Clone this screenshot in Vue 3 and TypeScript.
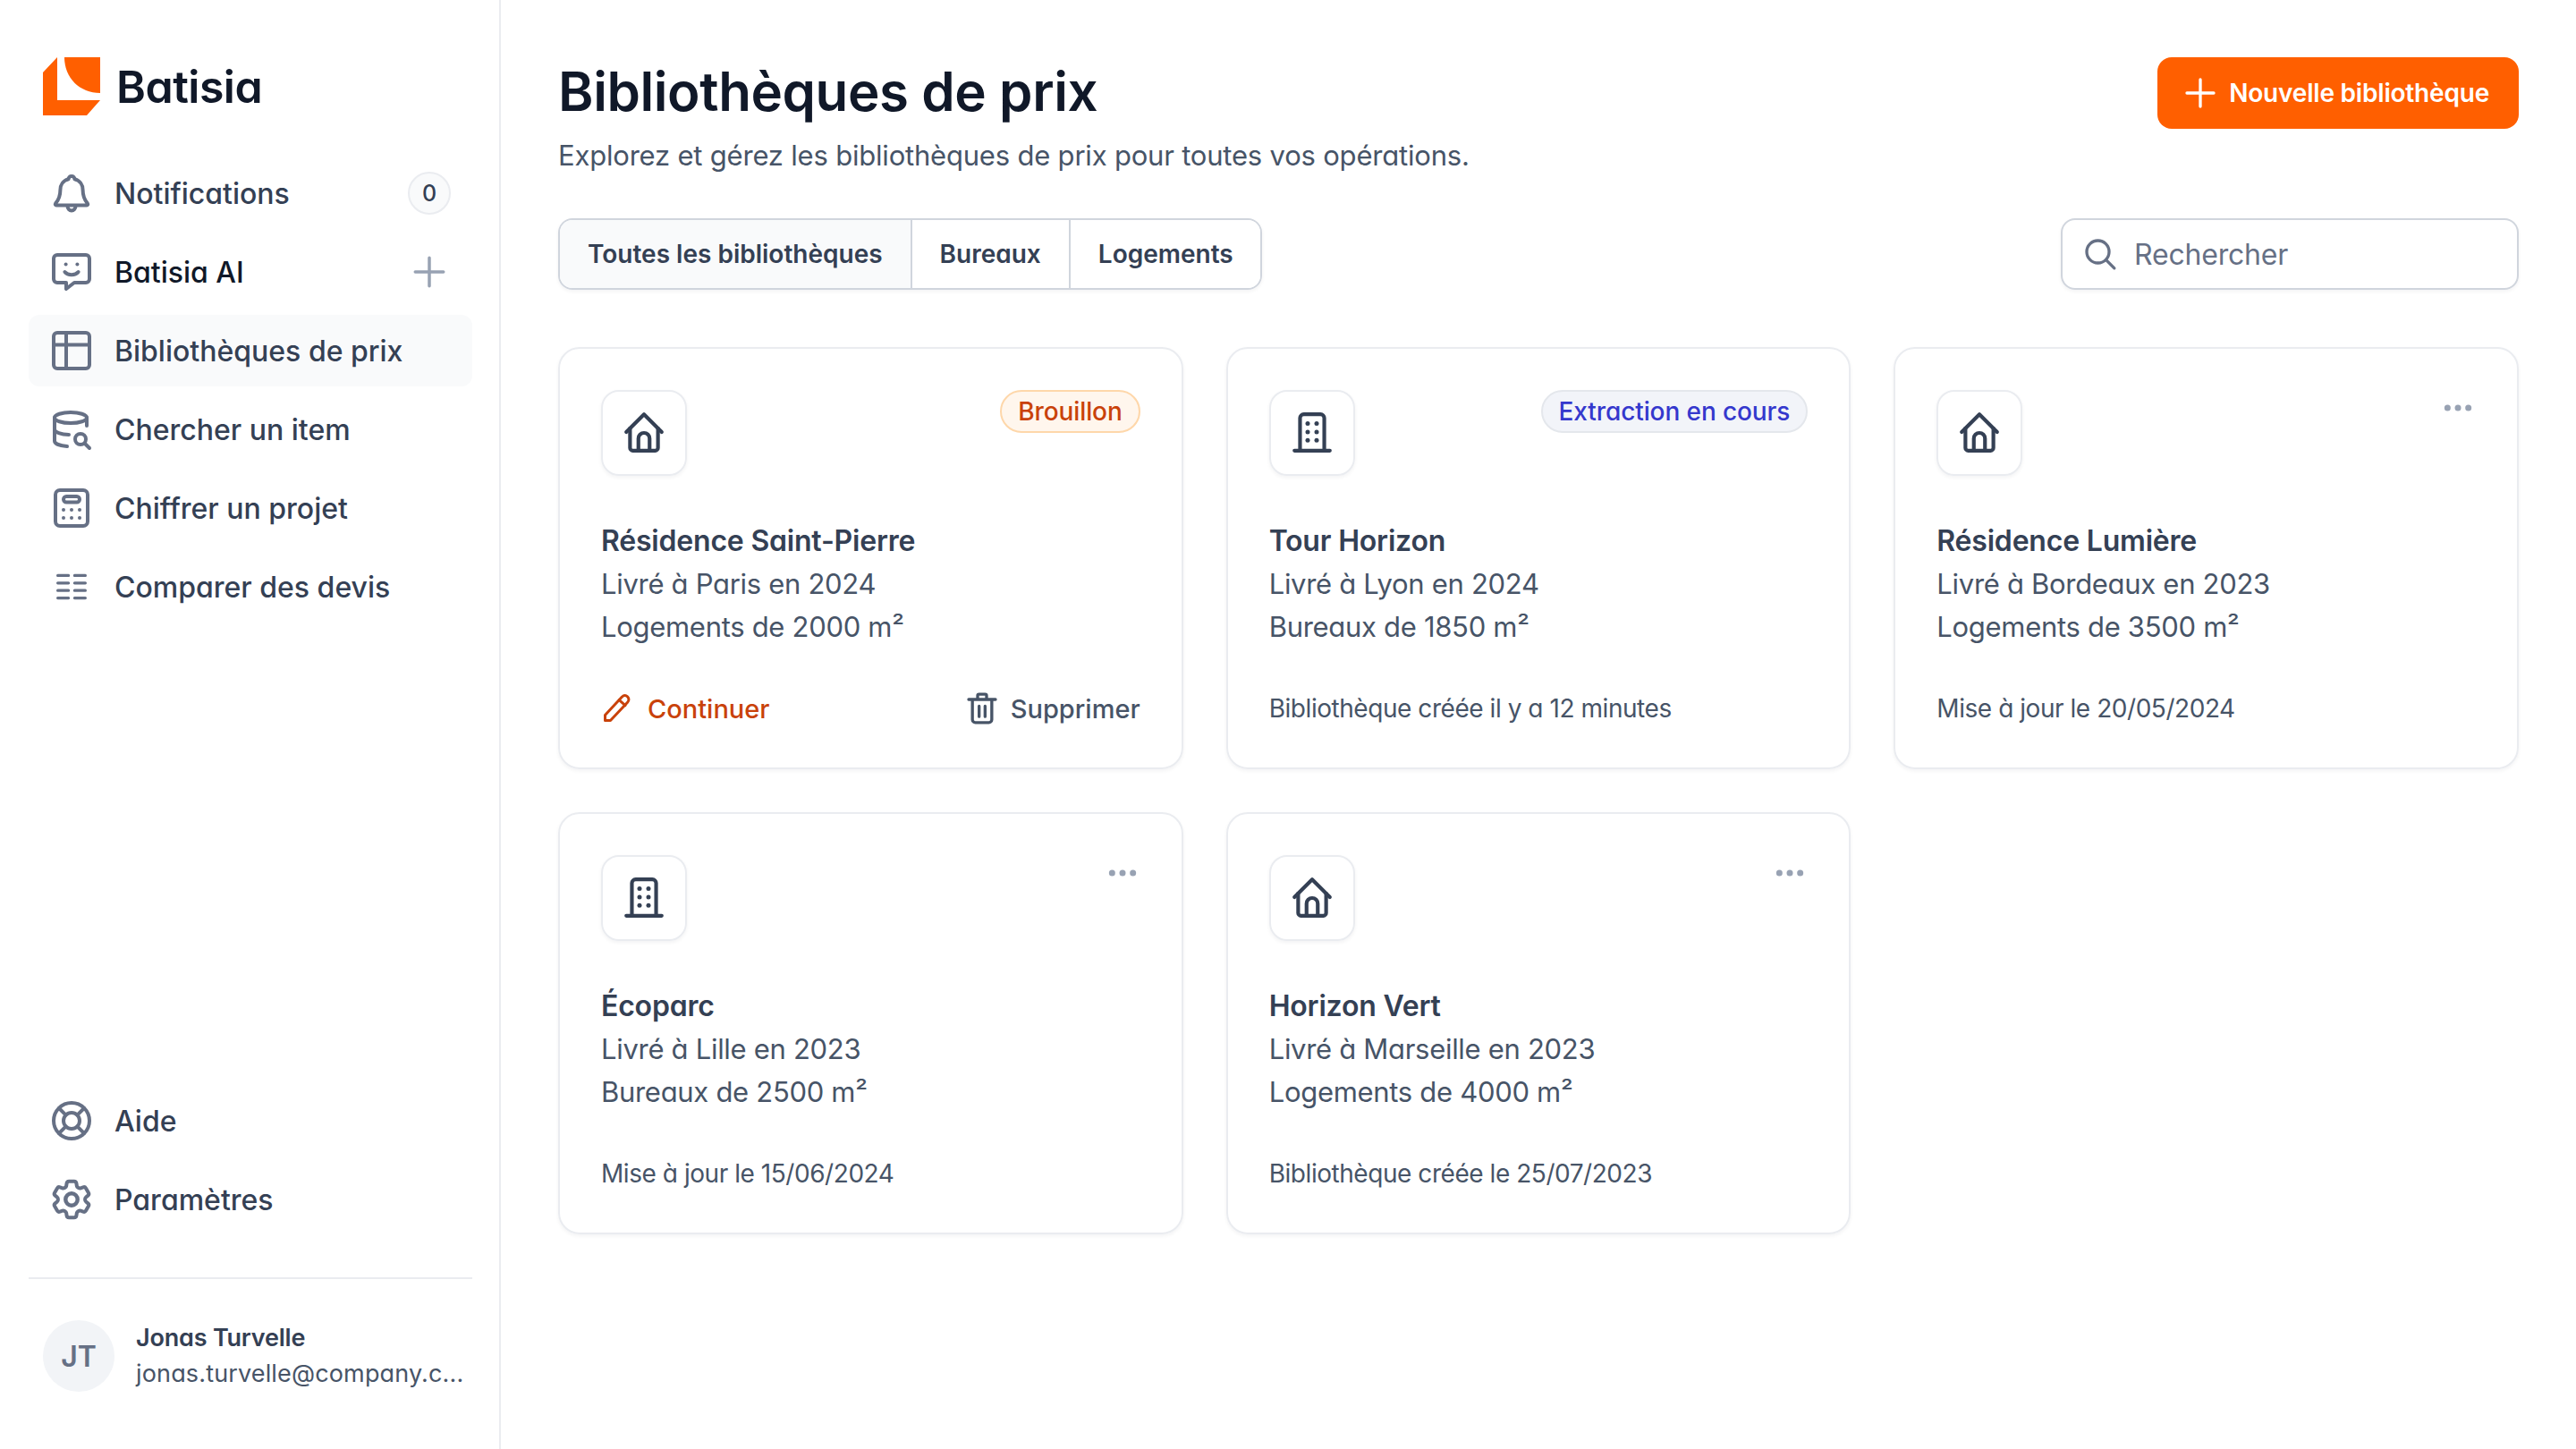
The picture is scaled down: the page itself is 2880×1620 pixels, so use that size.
<script setup lang="ts">
const icons: Record<string, string> = {
  bell: '<path d="M14.200 19.500a2.200 2.200 0 0 1-4.400 0"/><path d="M12 2.500c1 0 1.700.7 1.700 1.600 2.900.7 4.600 3.200 4.600 6.100 0 3.600.9 5.500 2.700 7.600.3.400 0 1-.5 1H3.500c-.5 0-.8-.6-.5-1 1.800-2.100 2.700-4 2.700-7.600 0-2.900 1.700-5.400 4.600-6.100 0-.9.700-1.600 1.700-1.600Z"/>',
  chat: '<path d="M4 2.500h16a2 2 0 0 1 2 2V16a2 2 0 0 1-2 2h-6.500L9 21.500V18H4a2 2 0 0 1-2-2V4.500a2 2 0 0 1 2-2Z"/><circle cx="8.800" cy="7.800" r="1" fill="currentColor" stroke="none"/><circle cx="15.200" cy="7.800" r="1" fill="currentColor" stroke="none"/><path d="M8.200 12c.8 1 2.200 1.600 3.800 1.600s3-.6 3.800-1.600"/>',
  table: '<rect x="2" y="2" width="20" height="20" rx="2"/><path d="M2 8.800h20M9 2v20"/>',
  db: '<ellipse cx="11.500" cy="5.500" rx="9" ry="3"/><path d="M2.500 5.500v13c0 1.500 3 2.700 7 3M20.500 5.500V10M2.500 12c0 1.500 3.500 3 8 3"/><circle cx="17" cy="17.500" r="3"/><path d="m19.500 20 2.500 2.500"/>',
  calc: '<rect x="3" y="2" width="18" height="20" rx="2.500"/><rect x="7.500" y="5.500" width="9" height="3.200" rx="1.600"/><g fill="currentColor" stroke="none"><circle cx="7.500" cy="13" r="1"/><circle cx="12" cy="13" r="1"/><circle cx="16.500" cy="13" r="1"/><circle cx="7.500" cy="17.500" r="1"/><circle cx="12" cy="17.500" r="1"/><circle cx="16.500" cy="17.500" r="1"/></g>',
  compare: '<path stroke-width="1.600" d="M4.300 5.700h6M4.300 9.900h6M4.300 14.100h6M4.300 18.300h6M13.700 5.700h6M13.700 9.900h6M13.700 14.100h6M13.700 18.300h6"/>',
  help: '<circle cx="12" cy="12" r="10"/><circle cx="12" cy="12" r="4.500"/><path d="m5 5 3.800 3.800M15.200 15.200 19 19M19 5l-3.800 3.800M8.800 15.200 5 19"/>',
  gear: '<g transform="translate(12 12) scale(1.120) translate(-12 -12)"><path stroke-width="1.800" d="M9.594 3.940c.09-.542.56-.94 1.110-.94h2.593c.55 0 1.020.398 1.110.94l.213 1.281c.063.374.313.686.645.87.074.04.147.083.22.127.325.196.72.257 1.075.124l1.217-.456a1.125 1.125 0 0 1 1.370.49l1.296 2.247a1.125 1.125 0 0 1-.26 1.431l-1.003.827c-.293.241-.438.613-.43.992a7.723 7.723 0 0 1 0 .255c-.008.378.137.75.43.991l1.004.827c.424.35.534.955.26 1.430l-1.298 2.247a1.125 1.125 0 0 1-1.369.491l-1.217-.456c-.355-.133-.75-.072-1.076.124a6.470 6.470 0 0 1-.22.128c-.331.183-.581.495-.644.869l-.213 1.281c-.09.543-.56.94-1.110.94h-2.594c-.55 0-1.019-.398-1.110-.94l-.213-1.281c-.062-.374-.312-.686-.644-.87a6.520 6.520 0 0 1-.22-.127c-.325-.196-.72-.257-1.076-.124l-1.217.456a1.125 1.125 0 0 1-1.369-.49l-1.297-2.247a1.125 1.125 0 0 1 .26-1.431l1.004-.827c.292-.24.437-.613.43-.991a6.932 6.932 0 0 1 0-.255c.007-.38-.138-.751-.43-.992l-1.004-.827a1.125 1.125 0 0 1-.26-1.430l1.297-2.247a1.125 1.125 0 0 1 1.370-.491l1.216.456c.356.133.751.072 1.076-.124.072-.044.146-.086.22-.128.332-.183.582-.495.644-.869l.214-1.280Z"/><circle cx="12" cy="12" r="3"/></g>',
  home: '<path d="M2.500 11.500 12 2l9.500 9.500"/><path d="M4.500 9.500V20a1.500 1.500 0 0 0 1.500 1.500h12a1.500 1.500 0 0 0 1.500-1.500V9.500"/><path d="M9 21.500V15a3 3 0 0 1 6 0v6.500"/>',
  building: '<path d="M5.500 21.500V4a2 2 0 0 1 2-2h9a2 2 0 0 1 2 2v17.500M2.500 21.500h19"/><g fill="currentColor" stroke="none"><circle cx="9.600" cy="7" r="1.200"/><circle cx="14.400" cy="7" r="1.200"/><circle cx="9.600" cy="11.500" r="1.200"/><circle cx="14.400" cy="11.500" r="1.200"/><circle cx="9.600" cy="16" r="1.200"/><circle cx="14.400" cy="16" r="1.200"/></g>',
  dots: '<g fill="currentColor" stroke="none"><circle cx="5" cy="12" r="2.100"/><circle cx="12" cy="12" r="2.100"/><circle cx="19" cy="12" r="2.100"/></g>',
  plus: '<path d="M12 3v18M3 12h18"/>',
  search: '<circle cx="10.500" cy="10.500" r="7.500"/><path d="m16 16 5.500 5.500"/>',
  pen: '<path d="M3 21v-4L15.500 3.500c1.300-1.300 3-1.400 4.200-.3 1.300 1.200 1.200 3 0 4.300L7 21H3Z"/><path d="m13.500 5.800 4.500 4"/>',
  trash: '<path d="M3 6h18M5.500 6v13.500a2 2 0 0 0 2 2h9a2 2 0 0 0 2-2V6M9 6V3.500a1 1 0 0 1 1-1h4a1 1 0 0 1 1 1V6M10 10.500v7M14 10.500v7"/>'
}

const topNav = [
  { icon: 'bell', label: 'Notifications', badge: '0' },
  { icon: 'chat', label: 'Batisia AI', plus: true, strong: true },
  { icon: 'table', label: 'Bibliothèques de prix', active: true },
  { icon: 'db', label: 'Chercher un item' },
  { icon: 'calc', label: 'Chiffrer un projet' },
  { icon: 'compare', label: 'Comparer des devis' }
]
const bottomNav = [
  { icon: 'help', label: 'Aide' },
  { icon: 'gear', label: 'Paramètres' }
]
const tabs = ['Toutes les bibliothèques', 'Bureaux', 'Logements']
const cards = [
  { icon: 'home', name: 'Résidence Saint-Pierre', place: 'Livré à Paris en 2024', size: 'Logements de 2000 m²', status: 'draft' },
  { icon: 'building', name: 'Tour Horizon', place: 'Livré à Lyon en 2024', size: 'Bureaux de 1850 m²', status: 'extract', note: 'Bibliothèque créée il y a 12 minutes' },
  { icon: 'home', name: 'Résidence Lumière', place: 'Livré à Bordeaux en 2023', size: 'Logements de 3500 m²', note: 'Mise à jour le 20/05/2024' },
  { icon: 'building', name: 'Écoparc', place: 'Livré à Lille en 2023', size: 'Bureaux de 2500 m²', note: 'Mise à jour le 15/06/2024' },
  { icon: 'home', name: 'Horizon Vert', place: 'Livré à Marseille en 2023', size: 'Logements de 4000 m²', note: 'Bibliothèque créée le 25/07/2023' }
]
</script>

<template>
  <div class="page">
    <aside class="sidebar">
      <div class="brand">
        <svg class="logo" viewBox="0 0 64 65" width="64" height="65">
          <path fill="#ff5f00" d="M0 17 16 0v48h48L49 65H0Z" />
          <path fill="#ff5f00" d="M24 0h40v40C41 40 24 23 24 0Z" />
        </svg>
        <span class="brand-name">Batisia</span>
      </div>
      <nav class="nav">
        <a v-for="item in topNav" :key="item.label" class="nav-item" :class="{ active: item.active, strong: item.strong }">
          <svg class="icon nav-icon" viewBox="0 0 24 24" v-html="icons[item.icon]"></svg>
          <span class="nav-label">{{ item.label }}</span>
          <span v-if="item.badge" class="count">{{ item.badge }}</span>
          <svg v-if="item.plus" class="icon nav-plus" viewBox="0 0 24 24" v-html="icons.plus"></svg>
        </a>
      </nav>
      <nav class="nav nav-bottom">
        <a v-for="item in bottomNav" :key="item.label" class="nav-item">
          <svg class="icon nav-icon" viewBox="0 0 24 24" v-html="icons[item.icon]"></svg>
          <span class="nav-label">{{ item.label }}</span>
        </a>
      </nav>
      <div class="user">
        <div class="avatar">JT</div>
        <div class="user-text">
          <div class="user-name">Jonas Turvelle</div>
          <div class="user-mail">jonas.turvelle@company.c...</div>
        </div>
      </div>
    </aside>

    <main class="main">
      <header class="head">
        <div>
          <h1>Bibliothèques de prix</h1>
          <p>Explorez et gérez les bibliothèques de prix pour toutes vos opérations.</p>
        </div>
        <button class="primary">
          <svg class="icon" viewBox="0 0 24 24" v-html="icons.plus"></svg>
          <span>Nouvelle bibliothèque</span>
        </button>
      </header>

      <div class="toolbar">
        <div class="tabs">
          <button v-for="(tab, i) in tabs" :key="tab" class="tab" :class="{ on: i === 0 }">{{ tab }}</button>
        </div>
        <div class="search">
          <svg class="icon" viewBox="0 0 24 24" v-html="icons.search"></svg>
          <span>Rechercher</span>
        </div>
      </div>

      <section class="grid">
        <article v-for="card in cards" :key="card.name" class="card">
          <div class="card-top">
            <div class="card-icon">
              <svg class="icon" viewBox="0 0 24 24" v-html="icons[card.icon]"></svg>
            </div>
            <span v-if="card.status === 'draft'" class="pill pill-draft">Brouillon</span>
            <span v-else-if="card.status === 'extract'" class="pill pill-extract">Extraction en cours</span>
            <svg v-else class="icon more" viewBox="0 0 24 24" v-html="icons.dots"></svg>
          </div>
          <h2>{{ card.name }}</h2>
          <div class="line">{{ card.place }}</div>
          <div class="line">{{ card.size }}</div>
          <div class="card-foot">
            <template v-if="card.note">
              <span class="note">{{ card.note }}</span>
            </template>
            <template v-else>
              <span class="act act-go">
                <svg class="icon" viewBox="0 0 24 24" v-html="icons.pen"></svg>Continuer
              </span>
              <span class="act act-del">
                <svg class="icon" viewBox="0 0 24 24" v-html="icons.trash"></svg>Supprimer
              </span>
            </template>
          </div>
        </article>
      </section>
    </main>
  </div>
</template>

<style>
html, body { margin: 0; background: #fff; }
</style>

<style scoped>
.page {
  display: flex;
  width: 2880px;
  height: 1620px;
  background: #fff;
  font-family: Inter, "Liberation Sans", sans-serif;
  font-feature-settings: "cv11" 1;
  color: #344054;
  overflow: hidden;
}
.icon {
  fill: none;
  stroke: currentColor;
  stroke-width: 2;
  stroke-linecap: round;
  stroke-linejoin: round;
  flex: none;
}

.sidebar {
  width: 560px;
  box-sizing: border-box;
  border-right: 2px solid #eaecf0;
  padding: 64px 30px 64px 32px;
  display: flex;
  flex-direction: column;
}
.brand {
  display: flex;
  align-items: center;
  gap: 18px;
  padding-left: 16px;
  height: 65px;
  margin-bottom: 47px;
}
.brand-name {
  font-size: 50px;
  font-weight: 600;
  color: #101828;
  letter-spacing: -0.5px;
}
.nav {
  display: flex;
  flex-direction: column;
  gap: 8px;
}
.nav-bottom {
  margin-top: auto;
}
.nav-item {
  display: flex;
  align-items: center;
  height: 80px;
  padding: 0 24px;
  border-radius: 12px;
  font-size: 32px;
  font-weight: 500;
  color: #344054;
}
.nav-item.active { background: #f9fafb; }
.nav-item.strong { color: #101828; }
.nav-icon {
  width: 48px;
  height: 48px;
  color: #667085;
  margin-right: 24px;
}
.nav-label { flex: 1; white-space: nowrap; }
.count {
  width: 48px;
  height: 48px;
  box-sizing: border-box;
  border: 2px solid #eaecf0;
  border-radius: 50%;
  background: #f9fafb;
  font-size: 25px;
  font-weight: 500;
  display: flex;
  align-items: center;
  justify-content: center;
}
.nav-plus {
  width: 42px;
  height: 42px;
  color: #98a2b3;
  margin-right: 3px;
}
.user {
  margin-top: 47px;
  padding: 46px 0 0 16px;
  border-top: 2px solid #eaecf0;
  display: flex;
  align-items: center;
  gap: 24px;
}
.avatar {
  width: 80px;
  height: 80px;
  border-radius: 50%;
  background: #f2f4f7;
  color: #667085;
  font-size: 32px;
  font-weight: 600;
  display: flex;
  align-items: center;
  justify-content: center;
  flex: none;
}
.user-text { min-width: 0; flex: 1; }
.user-name {
  font-size: 27px;
  font-weight: 600;
  line-height: 40px;
  letter-spacing: -0.2px;
}
.user-mail {
  font-size: 27px;
  line-height: 40px;
  letter-spacing: 0.15px;
  color: #475467;
  white-space: nowrap;
}

.main {
  flex: 1;
  padding: 64px 64px 0;
  min-width: 0;
}
.head {
  display: flex;
  justify-content: space-between;
  align-items: flex-start;
}
h1 {
  margin: 0;
  font-size: 60px;
  line-height: 76px;
  font-weight: 600;
  color: #101828;
  letter-spacing: -0.4px;
}
.head p {
  margin: 10px 0 0;
  font-size: 31px;
  line-height: 48px;
  letter-spacing: -0.2px;
  color: #475467;
}
.primary {
  display: flex;
  align-items: center;
  gap: 12px;
  height: 80px;
  padding: 0 33px 0 28px;
  border: none;
  border-radius: 16px;
  background: #ff5f00;
  color: #fff;
  font: inherit;
  font-size: 28px;
  font-weight: 600;
  letter-spacing: -0.2px;
}
.primary .icon { width: 40px; height: 40px; }

.toolbar {
  display: flex;
  justify-content: space-between;
  margin-top: 46px;
}
.tabs {
  display: flex;
  height: 80px;
  box-sizing: border-box;
  border: 2px solid #d0d5dd;
  border-radius: 16px;
  box-shadow: 0 2px 4px rgba(16, 24, 40, .05);
  overflow: hidden;
}
.tab {
  border: none;
  background: #fff;
  font: inherit;
  font-size: 28px;
  font-weight: 600;
  color: #344054;
  padding: 0 31px;
}
.tab:last-child { padding-right: 30px; }
.tab + .tab { border-left: 2px solid #d0d5dd; }
.tab.on { background: #f9fafb; }
.search {
  width: 512px;
  height: 80px;
  box-sizing: border-box;
  border: 2px solid #d0d5dd;
  border-radius: 16px;
  box-shadow: 0 2px 4px rgba(16, 24, 40, .05);
  display: flex;
  align-items: center;
  gap: 18px;
  padding: 0 22px;
  font-size: 32px;
  letter-spacing: -0.2px;
  color: #667085;
}
.search .icon { width: 40px; height: 40px; }

.grid {
  display: grid;
  grid-template-columns: repeat(3, 1fr);
  grid-auto-rows: 472px;
  gap: 48px;
  margin-top: 64px;
}
.card {
  box-sizing: border-box;
  border: 2px solid #eaecf0;
  border-radius: 24px;
  box-shadow: 0 2px 4px rgba(16, 24, 40, .05);
  padding: 46px;
  display: flex;
  flex-direction: column;
}
.card-top {
  display: flex;
  justify-content: space-between;
  align-items: flex-start;
  margin-bottom: 49px;
}
.card-icon {
  width: 96px;
  height: 96px;
  box-sizing: border-box;
  border: 2px solid #eaecf0;
  border-radius: 20px;
  box-shadow: 0 2px 4px rgba(16, 24, 40, .05);
  display: flex;
  align-items: center;
  justify-content: center;
  color: #344054;
}
.card-icon .icon { width: 50px; height: 50px; }
.more {
  width: 40px;
  height: 40px;
  color: #98a2b3;
}
.pill {
  height: 48px;
  box-sizing: border-box;
  border-radius: 24px;
  padding: 0 18px;
  font-size: 28px;
  font-weight: 500;
  letter-spacing: -0.1px;
  display: flex;
  align-items: center;
  white-space: nowrap;
}
.pill-draft { background: #fff6ed; border: 2px solid #fed7aa; color: #c9420a; }
.pill-extract { background: #f2f4f9; border: 2px solid #e4e7ec; color: #3538cd; }
h2 {
  margin: 0;
  font-size: 32px;
  line-height: 48px;
  font-weight: 600;
  letter-spacing: -0.2px;
  color: #344054;
}
.line {
  font-size: 31px;
  line-height: 48px;
  letter-spacing: -0.3px;
  color: #475467;
}
.card-foot {
  margin-top: auto;
  height: 40px;
  display: flex;
  justify-content: space-between;
  align-items: center;
  font-size: 28px;
}
.note { color: #475467; letter-spacing: -0.45px; }
.act {
  display: flex;
  align-items: center;
  font-size: 29px;
  font-weight: 500;
  color: #475467;
}
.act-go { color: #c9420a; gap: 16px; }
.act-go .icon { width: 36px; height: 36px; }
.act-del { gap: 12px; }
.act-del .icon { width: 40px; height: 40px; }
</style>
